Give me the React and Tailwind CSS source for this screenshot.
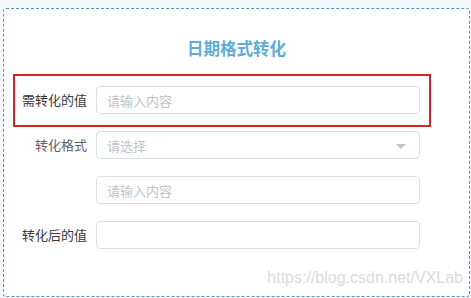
import React from 'react';

const font = { fontFamily: '"Noto Sans CJK SC", "Noto Sans", sans-serif' };

const Field = ({ placeholder, select }) => (
  <div className="relative w-[324px] h-[28px] border border-[#dcdfe6] rounded bg-white flex items-center pl-[10px]">
    <span className="text-[13px] text-[#c0c4cc] leading-none">{placeholder}</span>
    {select && (
      <span className="absolute right-[13px] top-[12px] w-0 h-0 border-l-[5px] border-r-[5px] border-t-[5px] border-l-transparent border-r-transparent border-t-[#c0c4cc]"></span>
    )}
  </div>
);

const App = () => {
  return (
    <div className="w-[471px] h-[298px] bg-[#f4f7fb] pt-[8px] pl-[3px] pr-[1px] overflow-hidden" style={font}>
      <div className="relative h-[289px] bg-white border border-dashed border-[#4a98c9] rounded-[3px]">
        {/* Title */}
        <div className="pt-[27px] h-[65px] text-center">
          <span className="text-[16.5px] font-bold text-[#62acd8] leading-none">日期格式转化</span>
        </div>

        {/* Highlighted row */}
        <div className="ml-[9px] w-[418px] h-[53px] border-2 border-[#d3262b] pt-[10px] flex">
          <div className="w-[72px] h-[28px] flex items-center justify-end text-[13px] text-[#3a3a3a]">需转化的值</div>
          <div className="ml-[9px]">
            <Field placeholder="请输入内容" />
          </div>
        </div>

        {/* Other rows */}
        <div className="mt-[4px] flex flex-col gap-[17px]">
          <div className="flex">
            <div className="w-[83px] h-[28px] flex items-center justify-end text-[13px] text-[#606266]">转化格式</div>
            <div className="ml-[9px]">
              <Field placeholder="请选择" select />
            </div>
          </div>
          <div className="flex">
            <div className="w-[83px] h-[28px]"></div>
            <div className="ml-[9px]">
              <Field placeholder="请输入内容" />
            </div>
          </div>
          <div className="flex">
            <div className="w-[83px] h-[28px] flex items-center justify-end text-[13px] text-[#3a3a3a]">转化后的值</div>
            <div className="ml-[9px]">
              <Field placeholder="" />
            </div>
          </div>
        </div>

        {/* Watermark */}
        <div className="absolute right-[6px] bottom-[10px] text-[16px] text-[#dcdcdc] leading-none" style={{ fontFamily: '"Liberation Sans", Arial, sans-serif' }}>
          https://blog.csdn.net/VXLab
        </div>
      </div>
    </div>
  );
};

export default App;
